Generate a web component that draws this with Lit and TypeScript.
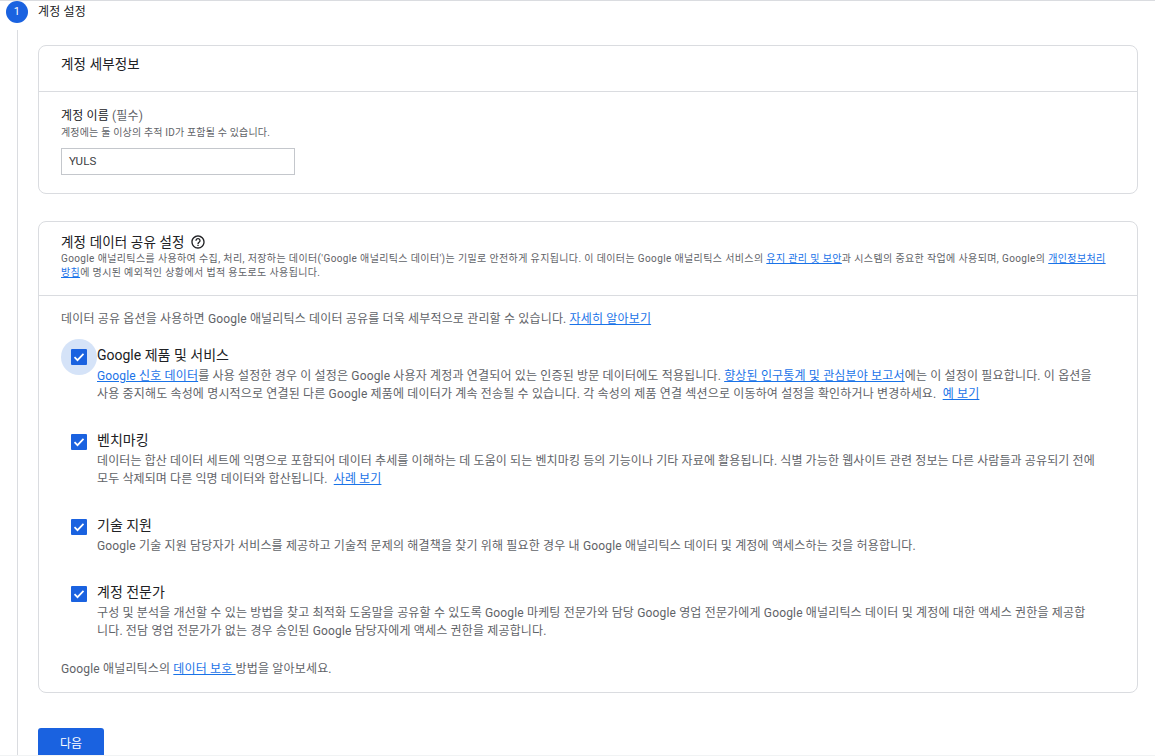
import { LitElement, html, css } from 'lit';
import { customElement } from 'lit/decorators.js';

@customElement('app-root')
export class AppRoot extends LitElement {
  static styles = css`
    :host {
      display: block;
      height: 756px;
      overflow: hidden;
      background: #fff;
      font-family: Roboto, 'Noto Sans CJK KR', sans-serif;
      color: #5f6368;
      font-size: 12px;
      letter-spacing: 0.16px;
      border-top: 1px solid #dadce0;
      border-bottom: 1px solid #f1f3f4;
      box-sizing: border-box;
    }
    a {
      color: #1a73e8;
      text-decoration: underline;
    }
    .step-head {
      display: flex;
      height: 23px;
      padding-left: 6px;
    }
    .step-num {
      width: 22px;
      height: 22px;
      border-radius: 50%;
      background: #1a62e0;
      color: #fff;
      font-size: 11px;
      line-height: 21px;
      text-align: center;
    }
    .step-title {
      margin-left: 10px;
      padding-top: 1px;
      font-size: 12px;
      line-height: 20px;
      color: #202124;
    }
    .step-body {
      margin: 6px 0 0 17px;
      border-left: 1px solid #dadce0;
      padding: 15px 17px 0 20px;
    }
    .card {
      border: 1px solid #dadce0;
      border-radius: 8px;
    }
    .card + .card {
      margin-top: 27px;
    }
    .card-head {
      padding: 0 24px 0 22px;
      border-bottom: 1px solid #dadce0;
    }
    .first-head {
      height: 45px;
      font-size: 13.5px;
      letter-spacing: 0.15px;
      line-height: 37px;
      color: #202124;
    }
    .share-head {
      height: 74px;
      box-sizing: border-box;
      padding-top: 10px;
    }
    .share-title {
      display: flex;
      align-items: center;
      gap: 5px;
      font-size: 13.5px;
      letter-spacing: 0.15px;
      line-height: 20px;
      color: #202124;
    }
    .share-title svg {
      display: block;
    }
    .share-desc {
      font-size: 10px;
      letter-spacing: 0.37px;
      line-height: 14px;
    }
    .name-body {
      padding: 16px 22px 0;
      height: 101px;
      box-sizing: border-box;
    }
    .name-label {
      font-size: 12px;
      line-height: 16px;
      color: #202124;
    }
    .name-label span {
      color: #5f6368;
    }
    .name-hint {
      font-size: 10px;
      letter-spacing: 0.17px;
      line-height: 14px;
      margin-top: 2px;
    }
    .name-input {
      width: 234px;
      height: 27px;
      box-sizing: border-box;
      border: 1px solid #c4c7cc;
      margin-top: 8px;
      padding-left: 7px;
      font-size: 11.5px;
      line-height: 25px;
      color: #3c4043;
    }
    .share-body {
      padding: 15px 22px 0;
      height: 396px;
      box-sizing: border-box;
    }
    .intro {
      line-height: 16px;
    }
    .option {
      display: flex;
      margin-top: 21px;
    }
    .intro + .option {
      margin-top: 12px;
    }
    .check-wrap {
      width: 36px;
      height: 36px;
      flex: none;
      display: flex;
      align-items: center;
      justify-content: center;
    }
    .check-wrap.focus {
      background: #d5e3f8;
      border-radius: 50%;
    }
    .check {
      width: 16px;
      height: 16px;
      border-radius: 1px;
      background: #1a62e0;
      display: block;
    }
    .option-text {
      width: 999px;
      padding-top: 7px;
    }
    .option-title {
      font-size: 14px;
      letter-spacing: 0;
      line-height: 18px;
      color: #202124;
    }
    .option-desc {
      line-height: 18px;
      margin-top: 3px;
    }
    .option-desc.tight {
      letter-spacing: 0.11px;
    }
    .footnote {
      line-height: 16px;
      margin-top: 21px;
    }
    .next {
      display: block;
      margin-top: 35px;
      width: 66px;
      height: 30px;
      padding: 0 0 2px;
      border: none;
      border-radius: 3px;
      background: #1a62e0;
      color: #fff;
      font: inherit;
      font-size: 12px;
    }
  `;

  check(focus = false) {
    return html`<div class="check-wrap ${focus ? 'focus' : ''}">
      <svg class="check" viewBox="0 0 16 16">
        <path d="M3.5 8.2l3 3 6-6.4" fill="none" stroke="#fff" stroke-width="1.7" />
      </svg>
    </div>`;
  }

  render() {
    return html`
      <div class="step-head">
        <div class="step-num">1</div>
        <div class="step-title">계정 설정</div>
      </div>
      <div class="step-body">
        <section class="card">
          <div class="card-head first-head">계정 세부정보</div>
          <div class="name-body">
            <div class="name-label">계정 이름 <span>(필수)</span></div>
            <div class="name-hint">계정에는 둘 이상의 추적 ID가 포함될 수 있습니다.</div>
            <div class="name-input">YULS</div>
          </div>
        </section>
        <section class="card">
          <div class="card-head share-head">
            <div class="share-title">
              계정 데이터 공유 설정
              <svg width="16" height="16" viewBox="0 0 24 24" fill="#202124">
                <path d="M11 18h2v-2h-2v2zm1-16C6.48 2 2 6.48 2 12s4.48 10 10 10 10-4.48 10-10S17.52 2 12 2zm0 18c-4.41 0-8-3.59-8-8s3.59-8 8-8 8 3.59 8 8-3.59 8-8 8zm0-14c-2.21 0-4 1.79-4 4h2c0-1.1.9-2 2-2s2 .9 2 2c0 2-3 1.75-3 5h2c0-2.25 3-2.5 3-5 0-2.21-1.79-4-4-4z" />
              </svg>
            </div>
            <div class="share-desc">
              Google 애널리틱스를 사용하여 수집, 처리, 저장하는 데이터('Google 애널리틱스 데이터')는 기밀로 안전하게 유지됩니다. 이 데이터는 Google 애널리틱스 서비스의 <a href="#">유지 관리 및 보안</a>과 시스템의 중요한 작업에 사용되며, Google의 <a href="#">개인정보처리방침</a>에 명시된 예외적인 상황에서 법적 용도로도 사용됩니다.
            </div>
          </div>
          <div class="share-body">
            <div class="intro">데이터 공유 옵션을 사용하면 Google 애널리틱스 데이터 공유를 더욱 세부적으로 관리할 수 있습니다. <a href="#">자세히 알아보기</a></div>
            <div class="option">
              ${this.check(true)}
              <div class="option-text">
                <div class="option-title">Google 제품 및 서비스</div>
                <div class="option-desc"><a href="#">Google 신호 데이터</a>를 사용 설정한 경우 이 설정은 Google 사용자 계정과 연결되어 있는 인증된 방문 데이터에도 적용됩니다. <a href="#">향상된 인구통계 및 관심분야 보고서</a>에는 이 설정이 필요합니다. 이 옵션을 사용 중지해도 속성에 명시적으로 연결된 다른 Google 제품에 데이터가 계속 전송될 수 있습니다. 각 속성의 제품 연결 섹션으로 이동하여 설정을 확인하거나 변경하세요. &nbsp;<a href="#">예 보기</a></div>
              </div>
            </div>
            <div class="option">
              ${this.check()}
              <div class="option-text">
                <div class="option-title">벤치마킹</div>
                <div class="option-desc tight">데이터는 합산 데이터 세트에 익명으로 포함되어 데이터 추세를 이해하는 데 도움이 되는 벤치마킹 등의 기능이나 기타 자료에 활용됩니다. 식별 가능한 웹사이트 관련 정보는 다른 사람들과 공유되기 전에 모두 삭제되며 다른 익명 데이터와 합산됩니다. &nbsp;<a href="#">사례 보기</a></div>
              </div>
            </div>
            <div class="option">
              ${this.check()}
              <div class="option-text">
                <div class="option-title">기술 지원</div>
                <div class="option-desc">Google 기술 지원 담당자가 서비스를 제공하고 기술적 문제의 해결책을 찾기 위해 필요한 경우 내 Google 애널리틱스 데이터 및 계정에 액세스하는 것을 허용합니다.</div>
              </div>
            </div>
            <div class="option">
              ${this.check()}
              <div class="option-text">
                <div class="option-title">계정 전문가</div>
                <div class="option-desc">구성 및 분석을 개선할 수 있는 방법을 찾고 최적화 도움말을 공유할 수 있도록 Google 마케팅 전문가와 담당 Google 영업 전문가에게 Google 애널리틱스 데이터 및 계정에 대한 액세스 권한을 제공합니다. 전담 영업 전문가가 없는 경우 승인된 Google 담당자에게 액세스 권한을 제공합니다.</div>
              </div>
            </div>
            <div class="footnote">Google 애널리틱스의 <a href="#">데이터 보호 </a>방법을 알아보세요.</div>
          </div>
        </section>
        <button class="next">다음</button>
      </div>
    `;
  }
}
